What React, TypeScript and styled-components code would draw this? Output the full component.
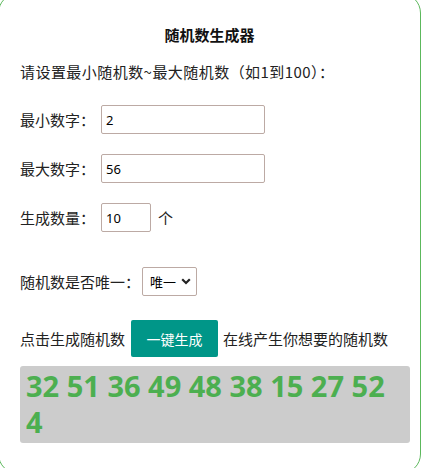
import React, { useState } from 'react';
import styled, { createGlobalStyle } from 'styled-components';

const GlobalStyle = createGlobalStyle`
  html, body {
    margin: 0;
    padding: 0;
    overflow: hidden;
    background: #fff;
  }
  body {
    font-family: 'Noto Sans CJK SC', 'Noto Sans', sans-serif;
    color: #222;
  }
`;

const Card = styled.div`
  width: 423px;
  margin: -7px 0 0 -2px;
  box-sizing: border-box;
  border: 1px solid #5cb85c;
  border-radius: 20px;
  padding: 31px 10px 30px 21px;
  font-size: 15px;
`;

const Title = styled.h3`
  margin: 0 -10px 0 -21px;
  font-size: 15px;
  font-weight: bold;
  line-height: 20px;
  text-align: center;
  color: #111;
`;

const Intro = styled.p`
  margin: 17px 0 0;
  line-height: 20px;
  letter-spacing: 0.45px;
`;

const Row = styled.div<{ $top: number; $height?: number }>`
  display: flex;
  align-items: center;
  margin-top: ${({ $top }) => $top}px;
  height: ${({ $height }) => $height ?? 29}px;
  line-height: 20px;
`;

const Label = styled.span<{ $gap?: number }>`
  margin-right: ${({ $gap }) => $gap ?? 6}px;
  white-space: nowrap;
`;

const NumberInput = styled.input<{ $width: number }>`
  width: ${({ $width }) => $width}px;
  height: 29px;
  box-sizing: border-box;
  padding: 0 4px;
  border: 1px solid #bcaaa4;
  border-radius: 2px;
  font-family: 'Noto Sans', sans-serif;
  font-size: 13px;
  color: #000;
  outline: none;
`;

const Unit = styled.span`
  margin-left: 7px;
`;

const SelectWrap = styled.div`
  position: relative;
  width: 55px;
  height: 29px;
`;

const Select = styled.select`
  appearance: none;
  width: 100%;
  height: 100%;
  box-sizing: border-box;
  padding: 0 0 0 7px;
  border: 1px solid #bcaaa4;
  border-radius: 2px;
  background: #fff;
  font-family: 'Noto Sans CJK SC', sans-serif;
  font-size: 13px;
  color: #000;
  outline: none;
`;

const Chevron = styled.svg`
  position: absolute;
  right: 6px;
  top: 11px;
  pointer-events: none;
`;

const GenButton = styled.button`
  height: 37px;
  width: 87px;
  margin: 0 5px 0 6px;
  border: none;
  border-radius: 2px;
  background: #009688;
  color: #fff;
  font-family: 'Noto Sans CJK SC', sans-serif;
  font-size: 14px;
  cursor: pointer;
`;

const Result = styled.div`
  margin-top: 9px;
  height: 77px;
  box-sizing: border-box;
  padding: 2px 6px 0;
  background: #ccc;
  border-radius: 3px;
  color: #4caf50;
  font-family: 'Open Sans', sans-serif;
  font-weight: bold;
  font-size: 29px;
  line-height: 36px;
`;

export default function App() {
  const [min, setMin] = useState('2');
  const [max, setMax] = useState('56');
  const [count, setCount] = useState('10');
  const [nums, setNums] = useState<number[]>([32, 51, 36, 49, 48, 38, 15, 27, 52, 4]);

  const generate = () => {
    const lo = parseInt(min, 10) || 0;
    const hi = parseInt(max, 10) || lo;
    const n = parseInt(count, 10) || 0;
    const out: number[] = [];
    while (out.length < n && out.length <= hi - lo) {
      const v = lo + Math.floor(Math.random() * (hi - lo + 1));
      if (!out.includes(v)) out.push(v);
    }
    setNums(out);
  };

  return (
    <>
      <GlobalStyle />
      <Card>
        <Title>随机数生成器</Title>
        <Intro>请设置最小随机数~最大随机数（如1到100）：</Intro>
        <Row $top={23}>
          <Label>最小数字：</Label>
          <NumberInput $width={164} value={min} onChange={(e) => setMin(e.target.value)} />
        </Row>
        <Row $top={20}>
          <Label>最大数字：</Label>
          <NumberInput $width={164} value={max} onChange={(e) => setMax(e.target.value)} />
        </Row>
        <Row $top={20}>
          <Label>生成数量：</Label>
          <NumberInput $width={50} value={count} onChange={(e) => setCount(e.target.value)} />
          <Unit>个</Unit>
        </Row>
        <Row $top={35}>
          <Label $gap={2}>随机数是否唯一：</Label>
          <SelectWrap>
            <Select defaultValue="1">
              <option value="1">唯一</option>
              <option value="0">不唯一</option>
            </Select>
            <Chevron width="10" height="7" viewBox="0 0 10 7">
              <path d="M1.2 1.2 L5 5 L8.8 1.2" fill="none" stroke="#222" strokeWidth="2.2" />
            </Chevron>
          </SelectWrap>
        </Row>
        <Row $top={24} $height={37}>
          <span>点击生成随机数</span>
          <GenButton onClick={generate}>一键生成</GenButton>
          <span>在线产生你想要的随机数</span>
        </Row>
        <Result>{nums.join(' ')}</Result>
      </Card>
    </>
  );
}
